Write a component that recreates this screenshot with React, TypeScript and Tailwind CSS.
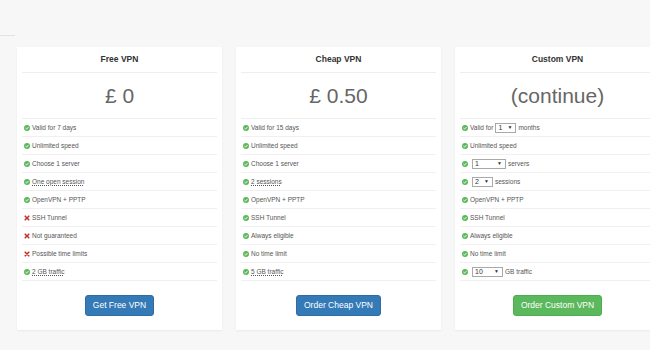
import React from "react"

type Feature = {
  ok: boolean
  content: React.ReactNode
}

function Check({ ok }: { ok: boolean }) {
  if (!ok)
    return (
      <svg width="6" height="6" viewBox="0 0 10 10" className="shrink-0">
        <path d="M2 2 L8 8 M8 2 L2 8" stroke="#c9302c" strokeWidth="2.6" strokeLinecap="round" />
      </svg>
    )
  return (
    <svg width="6" height="6" viewBox="0 0 10 10" className="shrink-0">
      <circle cx="5" cy="5" r="5" fill="#5cb85c" />
      <path d="M2.6 5.2 L4.3 6.8 L7.4 3.5" stroke="#fff" strokeWidth="1.6" fill="none" />
    </svg>
  )
}

function Abbr({ children }: { children: React.ReactNode }) {
  return <span className="underline decoration-dotted underline-offset-1">{children}</span>
}

function Select({ value, width }: { value: string; width: string }) {
  return (
    <span
      className={`inline-flex items-center justify-between h-[10px] border border-[#a9a9a9] bg-white pl-[2px] pr-[3px] text-[7px] leading-none text-[#333] mx-[2px] ${width}`}
    >
      <span>{value}</span>
      <span className="text-[5px]">▼</span>
    </span>
  )
}

type Plan = {
  name: string
  price: string
  features: Feature[]
  button: string
  buttonClass: string
}

const plans: Plan[] = [
  {
    name: "Free VPN",
    price: "£ 0",
    features: [
      { ok: true, content: "Valid for 7 days" },
      { ok: true, content: "Unlimited speed" },
      { ok: true, content: "Choose 1 server" },
      { ok: true, content: <Abbr>One open session</Abbr> },
      { ok: true, content: "OpenVPN + PPTP" },
      { ok: false, content: "SSH Tunnel" },
      { ok: false, content: "Not guaranteed" },
      { ok: false, content: "Possible time limits" },
      { ok: true, content: <Abbr>2 GB traffic</Abbr> },
    ],
    button: "Get Free VPN",
    buttonClass: "bg-[#337ab7] border-[#2e6da4]",
  },
  {
    name: "Cheap VPN",
    price: "£ 0.50",
    features: [
      { ok: true, content: "Valid for 15 days" },
      { ok: true, content: "Unlimited speed" },
      { ok: true, content: "Choose 1 server" },
      { ok: true, content: <Abbr>2 sessions</Abbr> },
      { ok: true, content: "OpenVPN + PPTP" },
      { ok: true, content: "SSH Tunnel" },
      { ok: true, content: "Always eligible" },
      { ok: true, content: "No time limit" },
      { ok: true, content: <Abbr>5 GB traffic</Abbr> },
    ],
    button: "Order Cheap VPN",
    buttonClass: "bg-[#337ab7] border-[#2e6da4]",
  },
  {
    name: "Custom VPN",
    price: "(continue)",
    features: [
      {
        ok: true,
        content: (
          <>
            Valid for <Select value="1" width="w-[21px]" /> months
          </>
        ),
      },
      { ok: true, content: "Unlimited speed" },
      {
        ok: true,
        content: (
          <>
            <Select value="1" width="w-[34px]" /> servers
          </>
        ),
      },
      {
        ok: true,
        content: (
          <>
            <Select value="2" width="w-[21px]" /> sessions
          </>
        ),
      },
      { ok: true, content: "OpenVPN + PPTP" },
      { ok: true, content: "SSH Tunnel" },
      { ok: true, content: "Always eligible" },
      { ok: true, content: "No time limit" },
      {
        ok: true,
        content: (
          <>
            <Select value="10" width="w-[31px]" /> GB traffic
          </>
        ),
      },
    ],
    button: "Order Custom VPN",
    buttonClass: "bg-[#5cb85c] border-[#4cae4c]",
  },
]

export default function App() {
  return (
    <div
      className="w-[650px] h-[350px] overflow-hidden bg-[#f7f7f7] relative"
      style={{ fontFamily: '"Liberation Sans", Arial, sans-serif' }}
    >
      <div className="absolute left-0 top-[35px] w-[15px] h-px bg-[#e2e2e2]" />
      <div className="flex gap-[14px] pl-[17px] pt-[47px]">
        {plans.map((plan) => (
          <div
            key={plan.name}
            className="w-[205px] h-[283px] shrink-0 bg-white px-[5px] shadow-[0_1px_2px_rgba(0,0,0,0.06)] flex flex-col"
          >
            <div className="h-[26px] flex items-center justify-center border-b border-[#eee] text-[8.5px] font-bold text-[#333]">
              {plan.name}
            </div>
            <div className="h-[46px] flex items-center justify-center border-b border-[#eee] text-[21px] text-[#666]">
              {plan.price}
            </div>
            {plan.features.map((f, i) => (
              <div
                key={i}
                className="h-[18px] flex items-center gap-[2px] pl-[2px] border-b border-[#f0f0f0] text-[6.5px] text-[#555] whitespace-nowrap"
              >
                <Check ok={f.ok} />
                <span className="flex items-center">{f.content}</span>
              </div>
            ))}
            <div className="flex justify-center pt-[14px]">
              <button
                className={`h-[21px] px-[7px] rounded-[3px] border text-white text-[8.5px] ${plan.buttonClass}`}
              >
                {plan.button}
              </button>
            </div>
          </div>
        ))}
      </div>
    </div>
  )
}
